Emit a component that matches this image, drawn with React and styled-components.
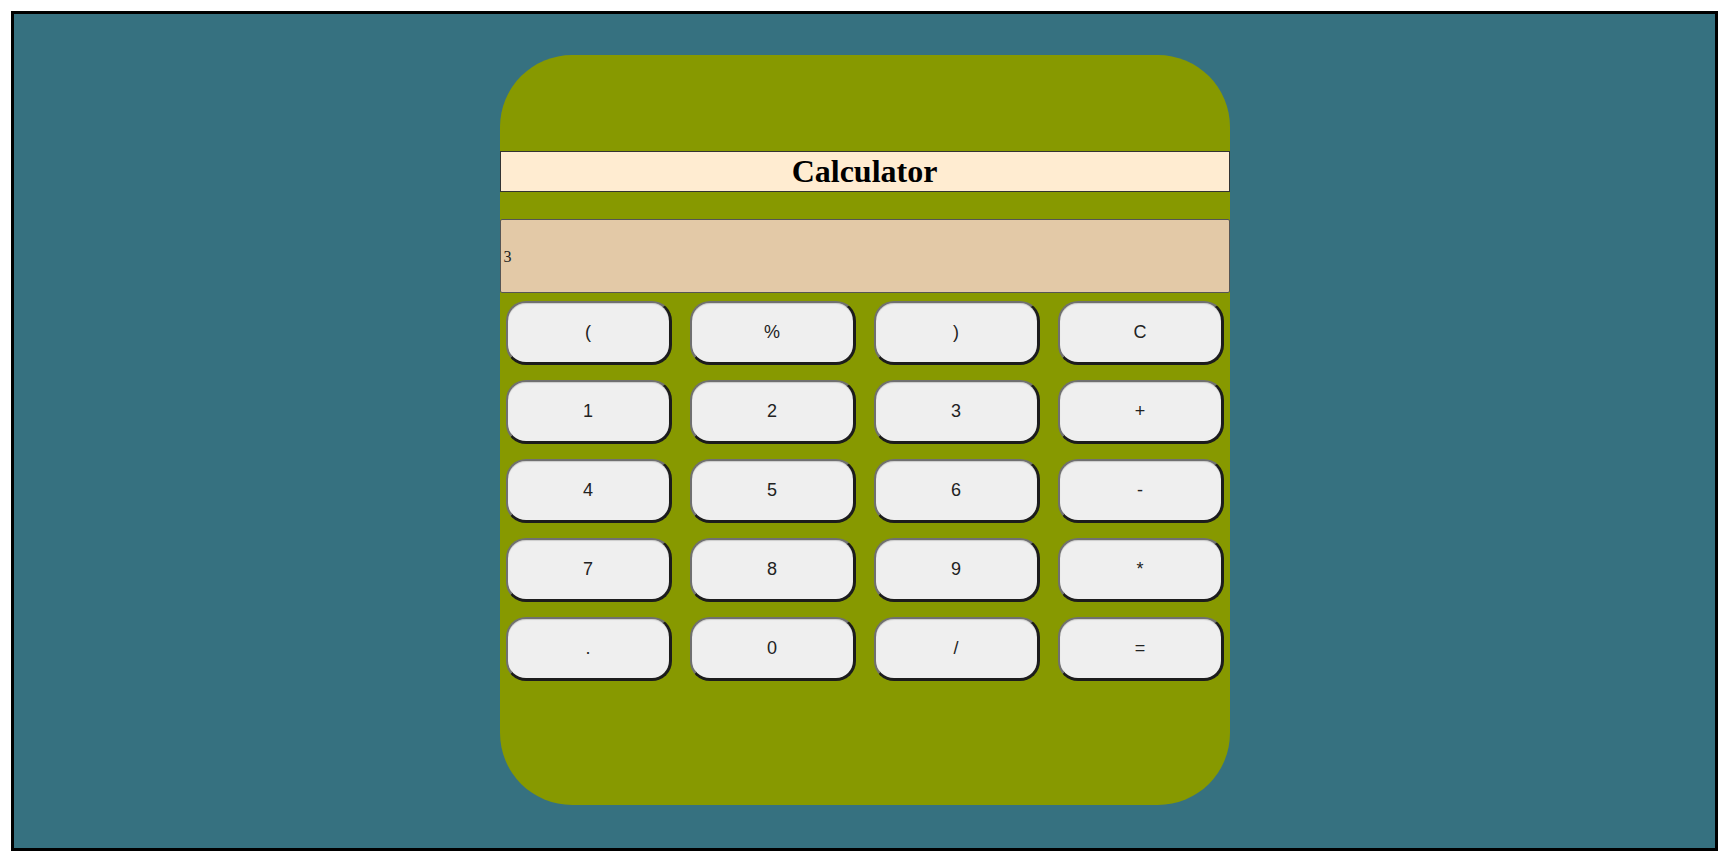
import React from 'react';
import styled, { createGlobalStyle } from 'styled-components';

const GlobalStyles = createGlobalStyle`
  html, body {
    margin: 0;
    padding: 0;
    background: #ffffff;
  }
  * {
    box-sizing: border-box;
  }
`

const Frame = styled.div`
  margin: 11px 4px 0 11px;
  height: 840px;
  border: 3px solid #000;
  background: #367180;
  overflow: hidden;
`

const Card = styled.div`
  width: 730px;
  height: 750px;
  margin: 41px auto 0;
  padding-top: 96px;
  border-radius: 72px;
  background: #879900;
`

const Title = styled.h1`
  margin: 0;
  height: 41px;
  border: 1px solid #333;
  background: #ffecd1;
  font-family: "Liberation Serif", "Times New Roman", serif;
  font-size: 32px;
  font-weight: bold;
  line-height: 39px;
  text-align: center;
  color: #000;
`

const Display = styled.div`
  display: flex;
  align-items: center;
  height: 74px;
  margin-top: 27px;
  padding: 2px 3px 0;
  border: 1px solid #555;
  border-radius: 2px;
  background: #e3c9a7;
  font-family: "Liberation Serif", "Times New Roman", serif;
  font-size: 16px;
  color: #222;
`

const Keys = styled.div`
  display: grid;
  grid-template-columns: repeat(4, 166px);
  grid-auto-rows: 64px;
  gap: 15px 18px;
  justify-content: center;
  margin-top: 8px;
`

const Key = styled.button`
  border: 2px solid #707070;
  border-right-color: #1c1c1c;
  border-bottom-color: #1c1c1c;
  border-right-width: 3px;
  border-bottom-width: 3px;
  border-radius: 20px;
  background: #efefef;
  box-shadow: inset 0 1px 1px rgba(0, 0, 0, 0.15);
  font-family: "Liberation Sans", Arial, sans-serif;
  font-size: 18px;
  color: #222;
  padding: 0;
  cursor: pointer;
`

const keys = ['(', '%', ')', 'C', '1', '2', '3', '+', '4', '5', '6', '-', '7', '8', '9', '*', '.', '0', '/', '=']

function App() {
  return (
    <>
      <GlobalStyles />
      <Frame>
        <Card>
          <Title>Calculator</Title>
          <Display>3</Display>
          <Keys>
            {keys.map((k) => (
              <Key key={k}>{k}</Key>
            ))}
          </Keys>
        </Card>
      </Frame>
    </>
  );
}

export default App;
